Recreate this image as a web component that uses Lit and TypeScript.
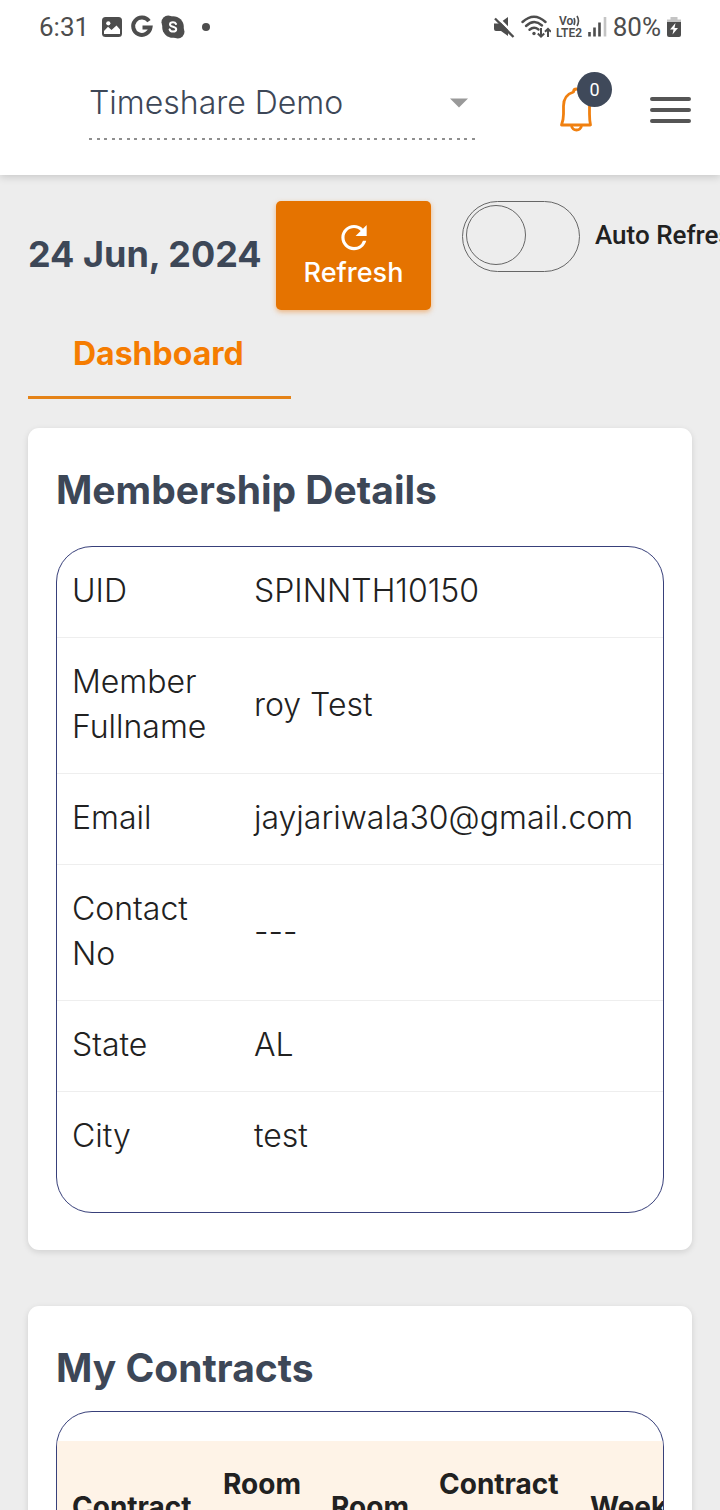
import { LitElement, html, css } from "lit";
import { customElement, state } from "lit/decorators.js";

interface Detail {
  label: string;
  value: string;
}

@customElement("status-bar")
class StatusBar extends LitElement {
  static styles = css`
    :host {
      display: flex;
      align-items: center;
      justify-content: space-between;
      height: 54px;
      box-sizing: border-box;
      padding: 0 38px 0 39px;
      font: 400 26px/32px Roboto, sans-serif;
      color: #4d4d4d;
      background: #fff;
    }
    .group {
      display: flex;
      align-items: center;
    }
    .left {
      gap: 7px;
    }
    .clock {
      margin-right: 5px;
    }
    .right {
      gap: 5px;
    }
    svg {
      display: block;
      flex: none;
    }
  `;

  render() {
    return html`
      <div class="group left">
        <span class="clock">6:31</span>
        <svg width="22" height="22" viewBox="0 0 22 22" aria-hidden="true">
          <rect x="1" y="1" width="20" height="20" rx="3.5" fill="#4d4d4d" />
          <circle cx="7.3" cy="7.3" r="2.1" fill="#fff" />
          <path d="M3 18v-3l4-4.200 3.500 3.200 5-4.500 3.500 4v4.500z" fill="#fff" />
        </svg>
        <svg width="24" height="24" viewBox="0 0 24 24" aria-hidden="true">
          <path
            d="M19 6.200A8.700 8.700 0 1 0 20.500 12.500H12.500"
            fill="none"
            stroke="#4d4d4d"
            stroke-width="4"
          />
        </svg>
        <svg width="24" height="24" viewBox="0 0 24 24" aria-hidden="true">
          <circle cx="12" cy="12" r="10.800" fill="#4d4d4d" />
          <circle cx="7.200" cy="7.200" r="6.700" fill="#4d4d4d" />
          <circle cx="16.800" cy="16.800" r="6.700" fill="#4d4d4d" />
          <path
            d="M15 9c-.5-1.200-1.600-1.800-3-1.800-1.700 0-3 .8-3 2.200 0 3 6.200 1.800 6.200 4.800 0 1.500-1.400 2.400-3.200 2.400-1.600 0-2.900-.7-3.400-2.200"
            fill="none"
            stroke="#fff"
            stroke-width="2"
            stroke-linecap="round"
          />
        </svg>
        <svg width="26" height="10" viewBox="0 0 26 10" aria-hidden="true">
          <circle cx="14" cy="5" r="4" fill="#4d4d4d" />
        </svg>
      </div>
      <div class="group right">
        <svg width="24" height="24" viewBox="0 0 24 24" aria-hidden="true">
          <path d="M2 8.500h5L16 2v19l-7-5H4q-2 0-2-2z" fill="#4d4d4d" />
          <path d="M4 1l20 20" stroke="#fff" stroke-width="2.500" />
          <path d="M3 3.500l18.500 18.500" stroke="#4d4d4d" stroke-width="2.300" />
        </svg>
        <svg width="30" height="26" viewBox="0 0 30 26" aria-hidden="true">
          <g fill="none" stroke="#4d4d4d" stroke-width="2.400" stroke-linecap="round">
            <path d="M1.500 8Q13 -2.500 24.500 8" />
            <path d="M5 12Q13 4.500 21 11.500" />
            <path d="M8.500 15.700Q13 12 17.500 15.500" />
          </g>
          <circle cx="13" cy="19.500" r="1.700" fill="#4d4d4d" />
          <g fill="none" stroke="#4d4d4d" stroke-width="2">
            <path d="M20 14v8.500M16.800 19.500l3.200 3.200 3.200-3.200" />
            <path d="M27 23v-8M24 17.800l3-3 3 3" />
          </g>
        </svg>
        <svg width="27" height="24" viewBox="0 0 27 24" aria-hidden="true">
          <g font-family="Roboto, sans-serif" font-weight="600" fill="#4d4d4d">
            <text x="3" y="10" font-size="12">Vo</text>
            <text x="0" y="22" font-size="12">LTE2</text>
          </g>
          <g fill="none" stroke="#4d4d4d" stroke-width="1.600">
            <path d="M18 3q1.500 3 0 7M21 1q3 5 0 10" />
          </g>
        </svg>
        <svg width="20" height="22" viewBox="0 0 20 22" aria-hidden="true">
          <path
            d="M1.500 16v4.500M6.500 11.500v9M11.500 6.500v14"
            stroke="#4d4d4d"
            stroke-width="2.600"
          />
          <path d="M17 1v19.500" stroke="#c4c4c4" stroke-width="2.600" />
        </svg>
        <span>80%</span>
        <svg width="16" height="22" viewBox="0 0 16 22" aria-hidden="true">
          <path d="M4.500 1h7v2.500H15V8H1V3.500h3.500z" fill="#c4c4c4" />
          <path d="M1 6h14v13q0 2-2 2H3q-2 0-2-2z" fill="#4d4d4d" />
          <path d="M9.500 7L4 13.500h3.500L6.500 18.500 12 12H8.500z" fill="#fff" />
        </svg>
      </div>
    `;
  }
}

@customElement("app-header")
class AppHeader extends LitElement {
  static styles = css`
    :host {
      display: flex;
      align-items: flex-start;
      box-sizing: border-box;
      height: 121px;
      padding: 18px 29px 0 89px;
      background: #fff;
    }
    .picker {
      display: grid;
      flex: 1;
      align-items: center;
      height: 68px;
      padding-bottom: 6px;
      box-sizing: border-box;
      background: linear-gradient(
          90deg,
          #8f8f8f 3px,
          transparent 3px 8px,
          #8f8f8f 8px 11px,
          transparent 11px
        )
        0 100% / 15px 2px repeat-x;
    }
    .picker > * {
      grid-area: 1 / 1;
    }
    select {
      width: 100%;
      height: 60px;
      margin: 0;
      padding: 0 48px 2px 0;
      border: 0;
      background: none;
      appearance: none;
      color: #3d4757;
      font: 300 32px/45px Inter, sans-serif;
    }
    .arrow {
      justify-self: end;
      margin-right: 7px;
      pointer-events: none;
    }
    button {
      padding: 0;
      border: 0;
      background: none;
    }
    svg {
      display: block;
    }
    .bell {
      position: relative;
      width: 53px;
      height: 60px;
      margin-left: 84px;
    }
    .badge {
      position: absolute;
      top: 0;
      right: 0;
      width: 35px;
      border-radius: 50%;
      color: #fff;
      background: #3f495a;
      font: 400 18px/35px Roboto, sans-serif;
      text-align: center;
    }
    .menu {
      margin: 24px 0 0 38px;
    }
  `;

  render() {
    return html`
      <div class="picker">
        <select aria-label="Site">
          <option>Timeshare Demo</option>
        </select>
        <svg class="arrow" width="18" height="10" viewBox="0 0 18 10" aria-hidden="true">
          <path d="M0 0.500h18L9 9.500z" fill="#999" />
        </svg>
      </div>
      <button class="bell" aria-label="Notifications">
        <svg width="36" height="60" viewBox="0 0 36 60" aria-hidden="true">
          <g fill="none" stroke="#f08010" stroke-width="2.800" stroke-linejoin="round">
            <path
              d="M14.500 20Q14.500 17 17.500 17T20.500 20C28 22 30.500 27 30.500 34V42Q30.500 48 31.500 53H2.500Q4.500 48 4.500 42V34C4.500 27 8 22 14.500 20z"
            />
            <path d="M12.500 54q1 4 5 4t5-4" />
          </g>
        </svg>
        <span class="badge">0</span>
      </button>
      <button class="menu" aria-label="Menu">
        <svg width="41" height="28" viewBox="0 0 41 28" aria-hidden="true">
          <path
            d="M2 3h37M2 14h37M2 25h37"
            stroke="#555"
            stroke-width="4"
            stroke-linecap="round"
          />
        </svg>
      </button>
    `;
  }
}

@customElement("app-root")
class AppRoot extends LitElement {
  static styles = css`
    :host {
      display: flex;
      flex-direction: column;
      height: 100vh;
      overflow: hidden;
      background: #ededed;
      color: #212121;
      font: 300 32px/45px Inter, sans-serif;
    }
    .top {
      flex: none;
      z-index: 1;
      box-shadow: 0 2px 8px rgba(0, 0, 0, 0.16);
    }
    main {
      flex: 1;
      min-height: 0;
      overflow: hidden auto;
      scrollbar-width: none;
      padding: 26px 28px 0;
    }
    .toolbar {
      display: flex;
      align-items: flex-start;
    }
    h1,
    h2 {
      margin: 0;
      color: #3d4757;
      font-weight: 700;
      white-space: nowrap;
    }
    h1 {
      flex: none;
      width: 233px;
      margin-right: 15px;
      font-size: 36px;
      line-height: 107px;
    }
    h2 {
      font-size: 39px;
      line-height: 56px;
    }
    .refresh {
      display: flex;
      flex: none;
      flex-direction: column;
      align-items: center;
      width: 155px;
      height: 109px;
      padding: 16px 0 0;
      box-sizing: border-box;
      border: 0;
      border-radius: 5px;
      color: #fff;
      background: #e57300;
      box-shadow: 0 2px 5px rgba(240, 125, 20, 0.5);
      font: 500 27px/36px Inter, sans-serif;
    }
    .refresh svg {
      flex: none;
    }
    .auto {
      display: flex;
      flex: none;
      align-items: flex-start;
      gap: 15px;
      margin-left: 31px;
      font: 500 26px/68px Roboto, sans-serif;
      white-space: nowrap;
    }
    .auto input {
      flex: none;
      width: 118px;
      height: 71px;
      margin: 0;
      padding: 3px;
      box-sizing: border-box;
      border: 1px solid #666;
      border-radius: 36px;
      appearance: none;
    }
    .auto input::before {
      display: block;
      width: 60px;
      height: 60px;
      box-sizing: border-box;
      border: 1px solid #666;
      border-radius: 50%;
      content: "";
    }
    .auto input:checked::before {
      margin-left: auto;
    }
    .tab {
      display: block;
      width: 263px;
      margin: 0 0 29px;
      padding: 21px 0 20px 45px;
      border: 0;
      border-bottom: 3px solid #e58317;
      color: #f57c00;
      background: none;
      font: 700 32px/45px Inter, sans-serif;
      text-align: left;
    }
    .card {
      margin-bottom: 56px;
      padding: 34px 28px 37px;
      border-radius: 11px;
      background: #fff;
      box-shadow: 0 2px 6px rgba(0, 0, 0, 0.12);
    }
    .frame {
      border: 1px solid #38407a;
      border-radius: 36px;
      overflow: auto hidden;
      scrollbar-width: none;
    }
    .details {
      margin-top: 28px;
      padding-bottom: 30px;
    }
    .contracts {
      margin-top: 15px;
      padding: 29px 0;
    }
    table {
      width: 100%;
      border-collapse: separate;
      border-spacing: 0;
    }
    .details th {
      width: 152px;
      font-weight: 300;
    }
    th,
    td {
      padding: 21px 15px 24px;
      text-align: left;
      vertical-align: middle;
    }
    .details tr + tr > * {
      border-top: 1px solid #eee;
    }
    .wide {
      width: 1000px;
      table-layout: fixed;
    }
    .wide th {
      padding-right: 0;
      background: #fef3e7;
      font-size: 28px;
      font-weight: 700;
    }
    .long {
      width: 136px;
    }
    .short {
      width: 93px;
    }
  `;

  @state() private autoRefresh = false;

  private details: Detail[] = [
    { label: "UID", value: "SPINNTH10150" },
    { label: "Member Fullname", value: "roy Test" },
    { label: "Email", value: "jayjariwala30@gmail.com" },
    { label: "Contact No", value: "---" },
    { label: "State", value: "AL" },
    { label: "City", value: "test" },
  ];

  private toggleAuto(e: Event) {
    this.autoRefresh = (e.target as HTMLInputElement).checked;
  }

  render() {
    return html`
      <div class="top">
        <status-bar></status-bar>
        <app-header></app-header>
      </div>
      <main>
        <div class="toolbar">
          <h1>24 Jun, 2024</h1>
          <button class="refresh">
            <svg width="38" height="38" viewBox="0 0 24 24" aria-hidden="true">
              <path
                d="M17.650 6.350A7.958 7.958 0 0 0 12 4c-4.420 0-7.990 3.580-7.990 8s3.570 8 7.990 8c3.730 0 6.840-2.550 7.730-6h-2.080A5.990 5.990 0 0 1 12 18c-3.310 0-6-2.690-6-6s2.690-6 6-6c1.660 0 3.140.69 4.220 1.780L13 11h7V4l-2.350 2.350z"
                fill="#fff"
                transform="translate(0 1)"
              />
            </svg>
            Refresh
          </button>
          <label class="auto">
            <input type="checkbox" .checked=${this.autoRefresh} @change=${this.toggleAuto} />
            Auto Refresh
          </label>
        </div>
        <button class="tab">Dashboard</button>
        <section class="card">
          <h2>Membership Details</h2>
          <div class="frame details">
            <table>
              <tbody>
                ${this.details.map(
                  (d) => html`<tr>
                    <th scope="row">${d.label}</th>
                    <td>${d.value}</td>
                  </tr>`
                )}
              </tbody>
            </table>
          </div>
        </section>
        <section class="card">
          <h2>My Contracts</h2>
          <div class="frame contracts">
            <table class="wide">
              <thead>
                <tr>
                  <th class="long">Contract No</th>
                  <th class="short">Room Type Name</th>
                  <th class="short">Room Size</th>
                  <th class="long">Contract Signing Date</th>
                  <th>Week<br />No</th>
                </tr>
              </thead>
            </table>
          </div>
        </section>
      </main>
    `;
  }
}
